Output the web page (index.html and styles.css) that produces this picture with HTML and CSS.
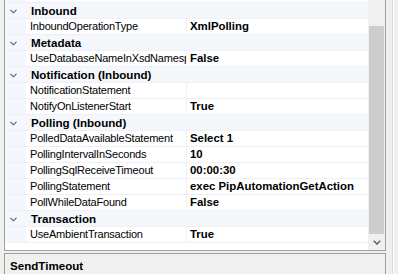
FILE: index.html
```html
<!DOCTYPE html>
<html>
<head>
<meta charset="utf-8">
<link rel="stylesheet" href="styles.css">
</head>
<body>
<div class="page">
  <div class="main">
    <div class="grid">
      <div class="rows">
        <div class="prop partial"><span class="label"></span><span class="value"></span></div>
        <div class="cat"><svg class="chev" width="7" height="5" viewBox="0 0 7 5"><polyline points="0.5,0.8 3.5,3.8 6.5,0.8" fill="none" stroke="#5f5f5f" stroke-width="1.1"/></svg><span class="cat-name">Inbound</span></div>
        <div class="prop"><span class="label">InboundOperationType</span><span class="value">XmlPolling</span></div>
        <div class="cat"><svg class="chev" width="7" height="5" viewBox="0 0 7 5"><polyline points="0.5,0.8 3.5,3.8 6.5,0.8" fill="none" stroke="#5f5f5f" stroke-width="1.1"/></svg><span class="cat-name">Metadata</span></div>
        <div class="prop"><span class="label">UseDatabaseNameInXsdNamespace</span><span class="value">False</span></div>
        <div class="cat"><svg class="chev" width="7" height="5" viewBox="0 0 7 5"><polyline points="0.5,0.8 3.5,3.8 6.5,0.8" fill="none" stroke="#5f5f5f" stroke-width="1.1"/></svg><span class="cat-name">Notification (Inbound)</span></div>
        <div class="prop"><span class="label">NotificationStatement</span><span class="value"></span></div>
        <div class="prop"><span class="label">NotifyOnListenerStart</span><span class="value">True</span></div>
        <div class="cat"><svg class="chev" width="7" height="5" viewBox="0 0 7 5"><polyline points="0.5,0.8 3.5,3.8 6.5,0.8" fill="none" stroke="#5f5f5f" stroke-width="1.1"/></svg><span class="cat-name">Polling (Inbound)</span></div>
        <div class="prop"><span class="label">PolledDataAvailableStatement</span><span class="value">Select 1</span></div>
        <div class="prop"><span class="label">PollingIntervalInSeconds</span><span class="value">10</span></div>
        <div class="prop"><span class="label">PollingSqlReceiveTimeout</span><span class="value">00:00:30</span></div>
        <div class="prop"><span class="label">PollingStatement</span><span class="value">exec PipAutomationGetAction</span></div>
        <div class="prop"><span class="label">PollWhileDataFound</span><span class="value">False</span></div>
        <div class="cat"><svg class="chev" width="7" height="5" viewBox="0 0 7 5"><polyline points="0.5,0.8 3.5,3.8 6.5,0.8" fill="none" stroke="#5f5f5f" stroke-width="1.1"/></svg><span class="cat-name">Transaction</span></div>
        <div class="prop"><span class="label">UseAmbientTransaction</span><span class="value">True</span></div>
      </div>
      <div class="scrollbar">
        <div class="track"></div>
        <div class="thumb"></div>
        <div class="arrow"><svg width="8" height="5" viewBox="0 0 8 5"><polyline points="0.7,0.7 4,4 7.3,0.7" fill="none" stroke="#606060" stroke-width="1.5"/></svg></div>
      </div>
    </div>
    <div class="desc"><span class="desc-title">SendTimeout</span></div>
  </div>
  <div class="edge"></div>
  <div class="side"></div>
</div>
</body>
</html>
```

FILE: styles.css
```css
html, body {
  margin: 0;
  padding: 0;
  background: #f0f0f0;
}
body {
  font-family: "Liberation Sans", Arial, sans-serif;
  color: #000;
  overflow: hidden;
}
.page {
  display: flex;
  width: 398px;
  height: 274px;
  overflow: hidden;
}
.main {
  width: 386px;
  padding-left: 4px;
  box-sizing: border-box;
  flex: none;
}
.grid {
  display: flex;
  width: 382px;
  height: 251px;
  box-sizing: border-box;
  border: 1px solid #a0a0a0;
  border-top: none;
}
.rows {
  width: 363px;
  background: #fff;
  overflow: hidden;
}
.prop {
  display: flex;
  height: 15px;
  border-bottom: 1px solid #edf0f6;
  background: #f4f7fc;
  font-size: 11px;
  letter-spacing: -0.2px;
  line-height: 15px;
}
.prop.partial {
  height: 2px;
}
.label {
  margin-left: 21px;
  width: 160px;
  flex: none;
  box-sizing: border-box;
  padding-left: 4px;
  background: #fff;
  white-space: nowrap;
  overflow: hidden;
}
.value {
  flex: 1;
  border-left: 1px solid #edf0f6;
  padding-left: 3px;
  background: #fff;
  font-weight: bold;
  font-size: 11.4px;
  letter-spacing: 0;
  white-space: nowrap;
  overflow: hidden;
}
.cat {
  display: flex;
  align-items: center;
  height: 15px;
  border-bottom: 1px solid #edf0f6;
  background: #f4f7fc;
  padding-left: 5px;
}
.chev {
  flex: none;
  margin-top: 1px;
}
.cat-name {
  margin-left: 14px;
  font-weight: bold;
  font-size: 11.6px;
  line-height: 15px;
  white-space: nowrap;
}
.scrollbar {
  width: 17px;
  display: flex;
  flex-direction: column;
  background: #f0f0f0;
}
.track {
  height: 26px;
  flex: none;
}
.thumb {
  height: 208px;
  margin: 0 1px;
  background: #cdcdcd;
  flex: none;
}
.arrow {
  flex: 1;
  display: flex;
  align-items: center;
  justify-content: center;
  padding-top: 1px;
}
.desc {
  margin-top: 2px;
  width: 382px;
  height: 40px;
  box-sizing: border-box;
  border: 1px solid #a0a0a0;
  padding: 2px 5px;
  background: #f0f0f0;
}
.desc-title {
  font-weight: bold;
  font-size: 11.6px;
  line-height: 15px;
}
.edge {
  width: 6px;
  flex: none;
}
.side {
  flex: 1;
  border-left: 1px solid #dcdcdc;
  box-shadow: inset 1px 0 0 #ffffff;
}
```
